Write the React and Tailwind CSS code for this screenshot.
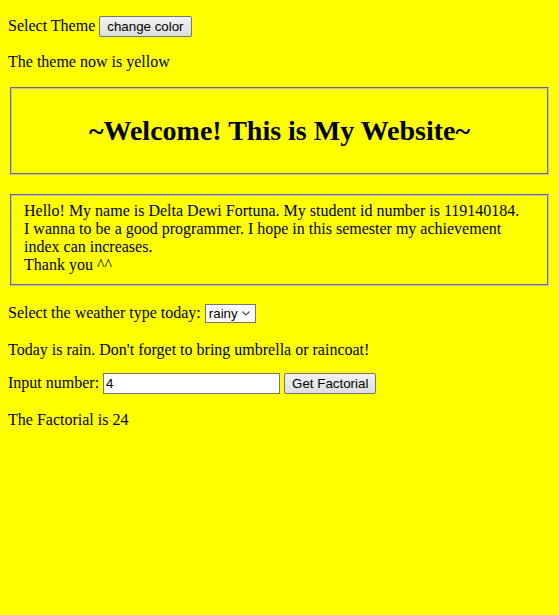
import React from "react";

export default function App() {
  const ctl = "font-['Liberation_Sans',Arial,sans-serif] text-[13.33px] text-black";
  return (
    <div className="min-h-[615px] bg-[#ffff00] px-2 pt-4 text-[16px] leading-[normal] text-black font-['Liberation_Serif','Times_New_Roman',serif]">
      <p className="h-[22px]">
        Select Theme{" "}
        <button className={`${ctl} h-[21px] px-[7px] border border-[#767676] rounded-[2px] bg-[linear-gradient(#f2f2f2,#dedede)] align-baseline`}>
          change color
        </button>
      </p>
      <p className="mt-[15px]">The theme now is yellow</p>
      <fieldset className="mx-[2px] mt-4 h-[88px] border-2 [border-style:groove] border-[#c0c0c0] flex items-center justify-center">
        <h1 className="text-[28px] font-bold">~Welcome! This is My Website~</h1>
      </fieldset>
      <fieldset className="mx-[2px] mt-[19px] border-2 [border-style:groove] border-[#c0c0c0] pl-3 pr-3 pt-[5.6px] pb-[10px]">
        Hello! My name is Delta Dewi Fortuna. My student id number is 119140184.
        <br />
        I wanna to be a good programmer. I hope in this semester my achievement index can increases.
        <br />
        Thank you ^^
      </fieldset>
      <p className="mt-[18px] h-[22px]">
        Select the weather type today:{" "}
        <span className={`${ctl} relative inline-block align-baseline`}>
          <select
            defaultValue="rainy"
            className={`${ctl} appearance-none h-[19px] w-[51px] border border-[#767676] bg-white pl-[3px] pr-[14px]`}
          >
            <option value="sunny">sunny</option>
            <option value="rainy">rainy</option>
          </select>
          <svg
            className="pointer-events-none absolute right-[6px] top-[7px]"
            width="8"
            height="5"
            viewBox="0 0 8 5"
            fill="none"
          >
            <path d="M0.5 0.5 L4 4 L7.5 0.5" stroke="#444" strokeWidth="1.1" />
          </svg>
        </span>
      </p>
      <p className="mt-[15px]">Today is rain. Don't forget to bring umbrella or raincoat!</p>
      <p className="mt-[14px] h-[22px]">
        Input number:{" "}
        <input
          type="text"
          defaultValue="4"
          className={`${ctl} h-[21px] w-[177px] border border-[#767676] bg-white px-[2px]`}
        />{" "}
        <button className={`${ctl} h-[21px] px-[7px] border border-[#767676] rounded-[2px] bg-[linear-gradient(#f2f2f2,#dedede)]`}>
          Get Factorial
        </button>
      </p>
      <p className="mt-[16px]">The Factorial is 24</p>
    </div>
  );
}
